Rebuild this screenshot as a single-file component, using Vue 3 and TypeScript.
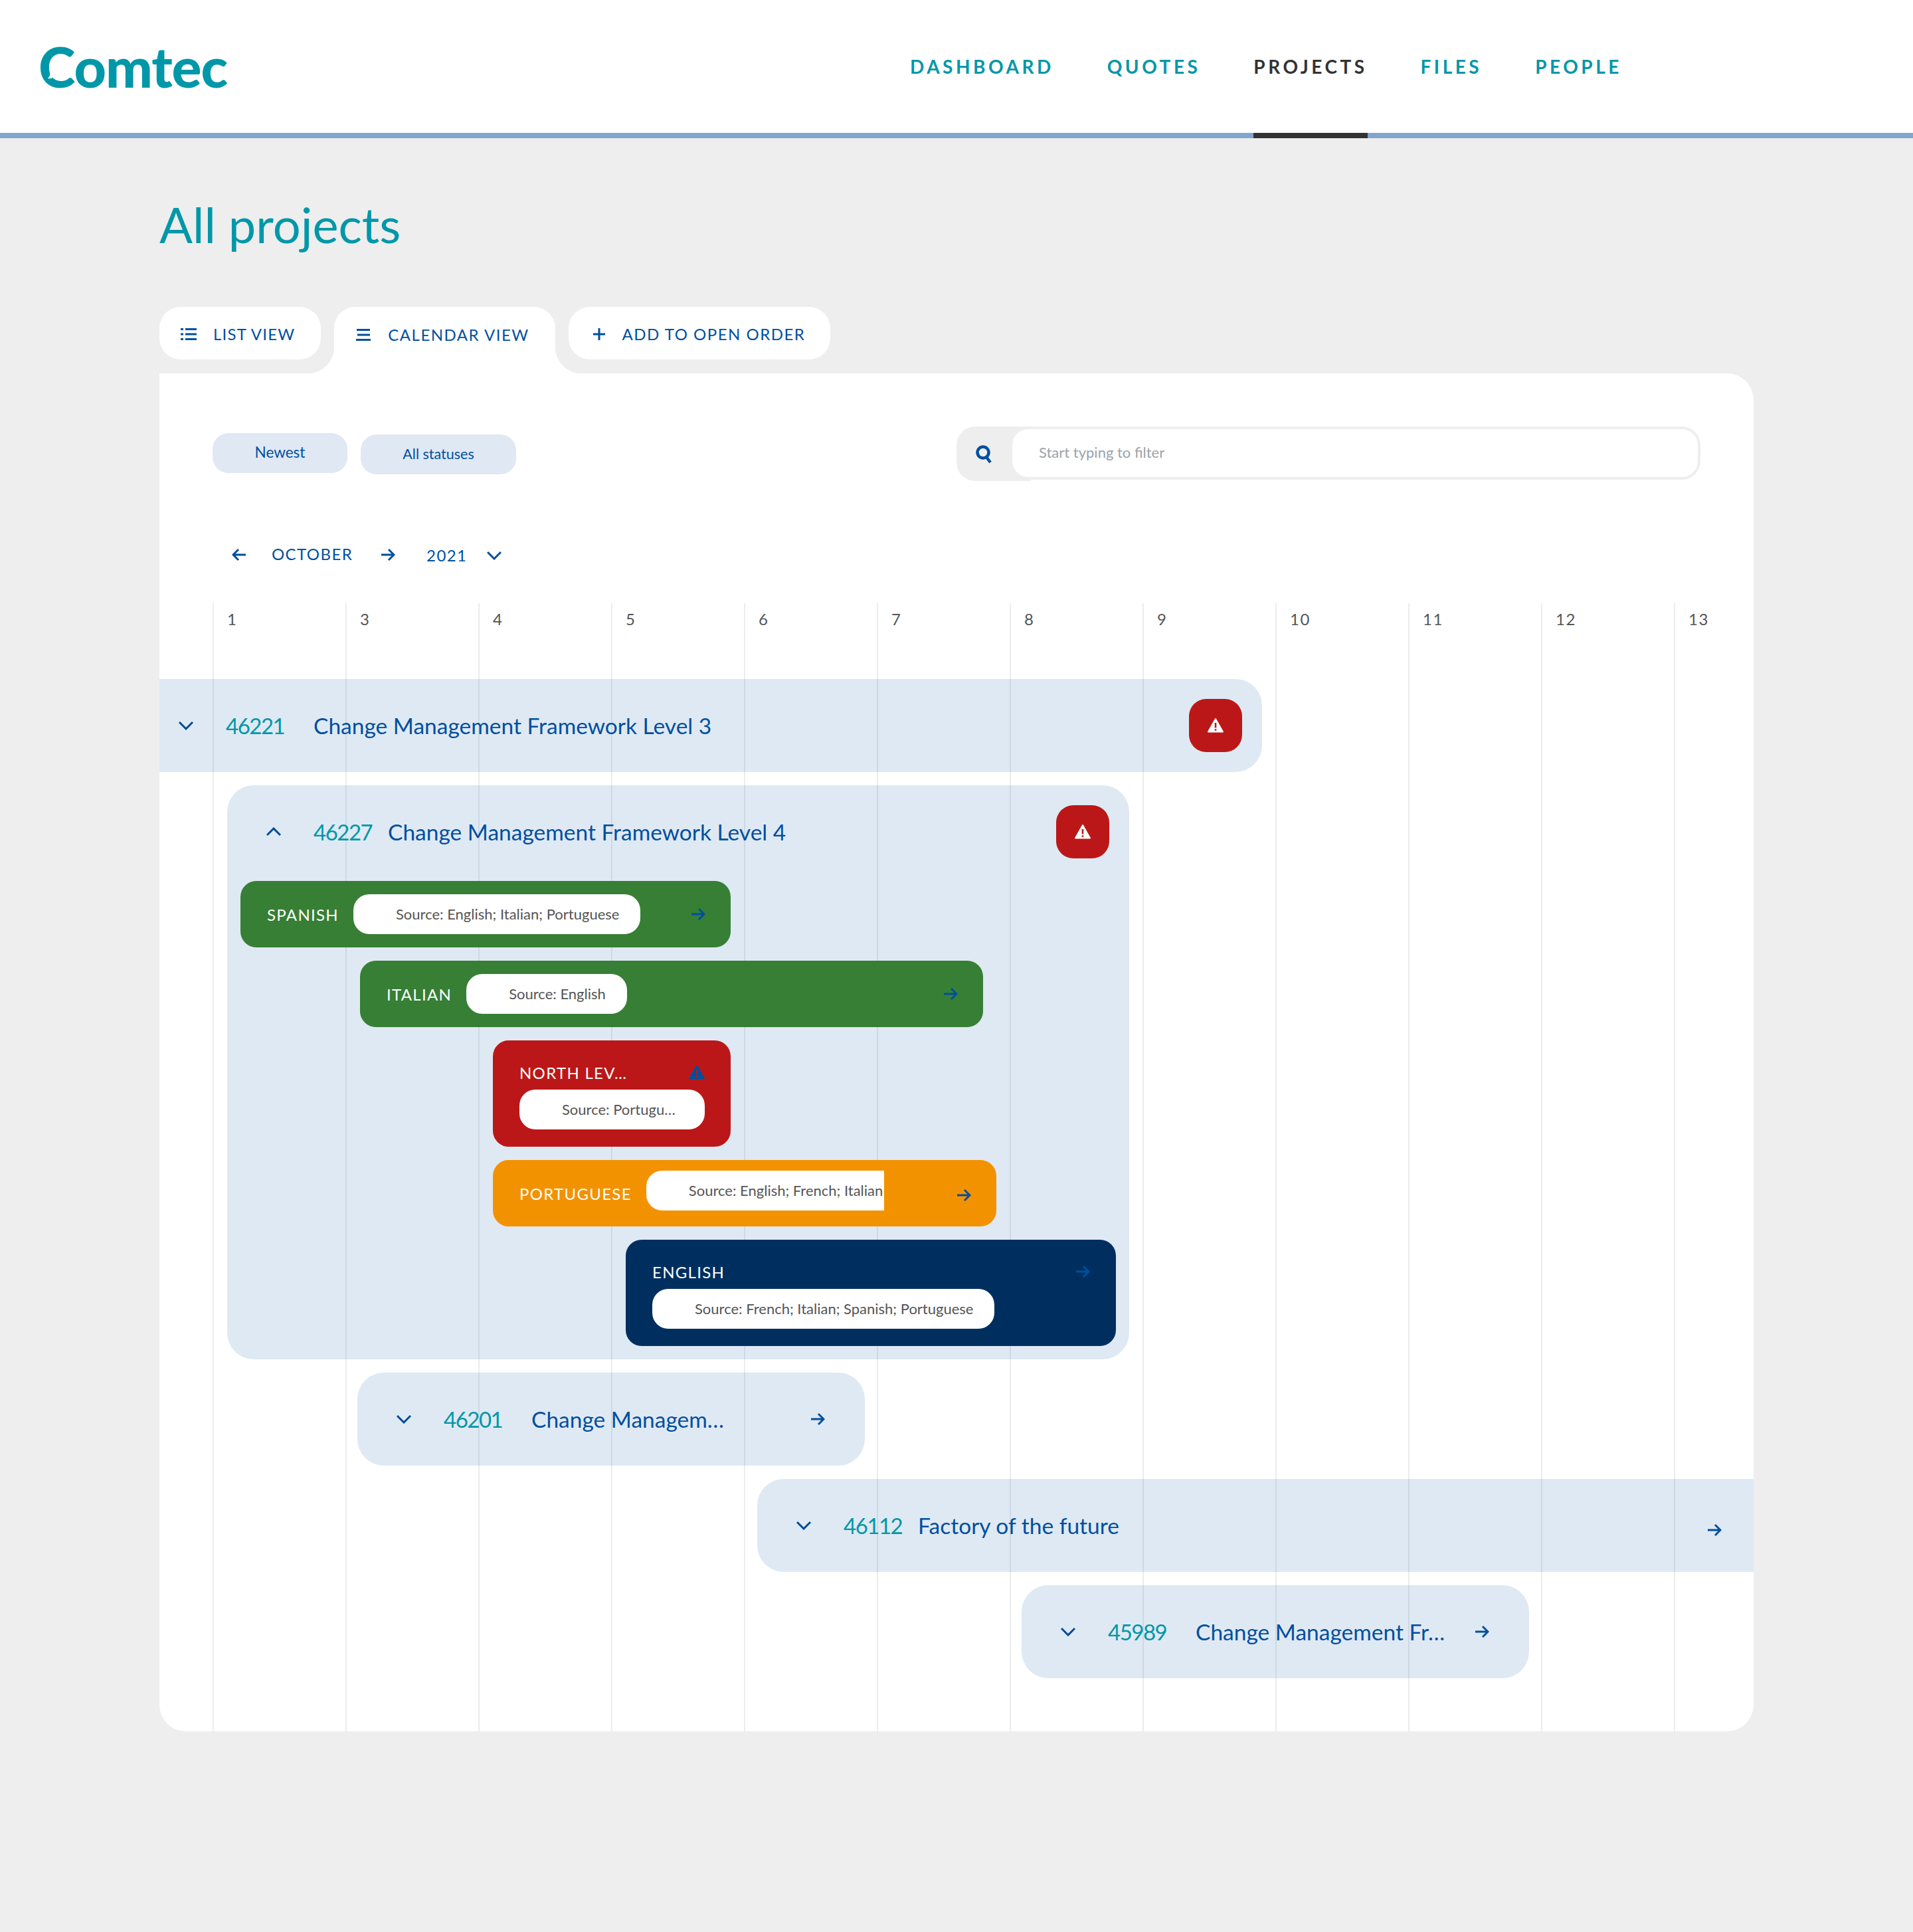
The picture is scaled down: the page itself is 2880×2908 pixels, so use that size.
<script setup lang="ts">
interface Bar { label: string; source: string; left: number; width: number; tone: string; stacked?: boolean; warn?: boolean; clipped?: boolean }
interface Row { id: string; title: string; left: number; width: number; end: 'alert' | 'arrow'; shape: string; tight?: boolean; open?: boolean; bars?: Bar[] }

const days: number[] = [1, 3, 4, 5, 6, 7, 8, 9, 10, 11, 12, 13]
const navItems = [
  { label: 'DASHBOARD', active: false },
  { label: 'QUOTES', active: false },
  { label: 'PROJECTS', active: true },
  { label: 'FILES', active: false },
  { label: 'PEOPLE', active: false },
]
const rows: Row[] = [
  { id: '46221', title: 'Change Management Framework Level 3', left: 0, width: 1660, end: 'alert', shape: 'flush-left' },
  {
    id: '46227', title: 'Change Management Framework Level 4', left: 102, width: 1358, end: 'alert', shape: 'round', tight: true, open: true,
    bars: [
      { label: 'SPANISH', source: 'Source: English; Italian; Portuguese', left: 20, width: 738, tone: 'green' },
      { label: 'ITALIAN', source: 'Source: English', left: 200, width: 938, tone: 'green' },
      { label: 'NORTH LEV…', source: 'Source: Portugu…', left: 400, width: 358, tone: 'red', stacked: true, warn: true },
      { label: 'PORTUGUESE', source: 'Source: English; French; Italian', left: 400, width: 758, tone: 'orange', clipped: true },
      { label: 'ENGLISH', source: 'Source: French; Italian; Spanish; Portuguese', left: 600, width: 738, tone: 'navy', stacked: true },
    ],
  },
  { id: '46201', title: 'Change Managem…', left: 298, width: 764, end: 'arrow', shape: 'round' },
  { id: '46112', title: 'Factory of the future', left: 900, width: 1500, end: 'arrow', shape: 'flush-right', tight: true },
  { id: '45989', title: 'Change Management Fr…', left: 1298, width: 764, end: 'arrow', shape: 'round' },
]
</script>

<template>
  <div class="page">
    <header class="header">
      <div class="logo">
        Comtec
        <svg class="logo-notch" width="16" height="12" viewBox="0 0 16 12"><path d="M15 1C12 3 6 3 3 1c1 3 0 6-3 9 4 1 9-1 11-4 2 0 3-1 4-5z" fill="#fff" /></svg>
      </div>
      <nav class="nav">
        <a v-for="n in navItems" :key="n.label" class="nav-link" :class="{ active: n.active }">{{ n.label }}</a>
      </nav>
    </header>

    <main class="main">
      <h1 class="title">All projects</h1>

      <div class="tabs">
        <button class="tab list">
          <svg width="24" height="20" viewBox="0 0 24 20"><path d="M0 1h4v3H0zM0 8.500h4v3H0zM0 16h4v3H0z" fill="#004f9f" /><path d="M7 2.500h17M7 10h17M7 17.500h17" stroke="#004f9f" stroke-width="3" /></svg>
          LIST VIEW
        </button>
        <button class="tab current">
          <svg width="24" height="20" viewBox="0 0 24 20"><path d="M2 2.500h20M3 10h19M1 17.500h22" stroke="#004f9f" stroke-width="3" /></svg>
          CALENDAR VIEW
        </button>
        <button class="tab add">
          <svg width="20" height="20" viewBox="0 0 20 20"><path d="M1 10h18M10 1v18" stroke="#004f9f" stroke-width="3" /></svg>
          ADD TO OPEN ORDER
        </button>
      </div>

      <section class="panel">
        <div class="toolbar">
          <div class="filters">
            <button class="filter newest">Newest</button>
            <button class="filter statuses">All statuses</button>
          </div>
          <div class="search">
            <span class="search-icon">
              <svg width="26" height="28" viewBox="0 0 26 28"><circle cx="12" cy="11" r="8.500" fill="none" stroke="#004f9f" stroke-width="4.500" /><path d="M17 18l6 8" stroke="#004f9f" stroke-width="4.500" /></svg>
            </span>
            <div class="search-input">Start typing to filter</div>
          </div>
        </div>

        <div class="month">
          <svg class="month-prev" width="22" height="20" viewBox="0 0 22 20"><path d="M21 10H2M10 2l-8 8 8 8" fill="none" stroke="#004f9f" stroke-width="3" /></svg>
          <span class="month-name">OCTOBER</span>
          <svg class="month-next" width="22" height="20" viewBox="0 0 22 20"><path d="M1 10h19M12 2l8 8-8 8" fill="none" stroke="#004f9f" stroke-width="3" /></svg>
          <span class="month-year">2021</span>
          <svg class="month-drop" width="22" height="14" viewBox="0 0 22 14"><path d="M1 2l10 10L21 2" fill="none" stroke="#004f9f" stroke-width="3" /></svg>
        </div>

        <div class="gantt">
          <div class="days">
            <span v-for="d in days" :key="d" class="day">{{ d }}</span>
          </div>

          <div class="rows">
            <article
              v-for="r in rows"
              :key="r.id"
              class="row"
              :class="r.shape"
              :style="{ marginLeft: r.left + 'px', width: r.width + 'px' }"
            >
              <div class="row-head" :class="{ 'row-tight': r.tight }">
                <svg class="chev" width="22" height="14" viewBox="0 0 22 14">
                  <path :d="r.open ? 'M1 12L11 2l10 10' : 'M1 2l10 10L21 2'" fill="none" stroke="#004a93" stroke-width="3" />
                </svg>
                <span class="row-id">{{ r.id }}</span>
                <span class="row-title">{{ r.title }}</span>
                <span v-if="r.end === 'alert'" class="alert">
                  <svg width="24" height="22" viewBox="0 0 24 22"><path d="M12 1L1 20.500h22z" fill="#fff" stroke="#fff" stroke-width="2" stroke-linejoin="round" /><path d="M12 7v7.500M12 16.200v2.600" stroke="#bc1718" stroke-width="2.600" /></svg>
                </span>
                <svg v-else class="row-arrow" width="22" height="20" viewBox="0 0 22 20"><path d="M1 10h19M12 2l8 8-8 8" fill="none" stroke="#004f9f" stroke-width="3" /></svg>
              </div>

              <div v-if="r.bars" class="bars">
                <div
                  v-for="b in r.bars"
                  :key="b.label"
                  class="bar"
                  :class="[b.tone, { stacked: b.stacked, clipped: b.clipped }]"
                  :style="{ marginLeft: b.left + 'px', width: b.width + 'px' }"
                >
                  <div class="bar-top">
                    <span class="bar-label">{{ b.label }}</span>
                    <template v-if="!b.stacked"><span class="pill">{{ b.source }}</span></template>
                    <svg v-if="b.warn" class="bar-end" width="24" height="22" viewBox="0 0 24 22"><path d="M12 1L1 20.500h22z" fill="#004f9f" stroke="#004f9f" stroke-width="2" stroke-linejoin="round" /><path d="M12 7v7.500M12 16.200v2.600" stroke="#bc1718" stroke-width="2.400" /></svg>
                    <svg v-else class="bar-end" width="22" height="20" viewBox="0 0 22 20"><path d="M1 10h19M12 2l8 8-8 8" fill="none" stroke="#004f9f" stroke-width="3" /></svg>
                  </div>
                  <span v-if="b.stacked" class="pill">{{ b.source }}</span>
                </div>
              </div>
            </article>
          </div>
        </div>
      </section>
    </main>
  </div>
</template>

<style>
body { margin: 0; }
</style>

<style scoped>
.page { background: #eeeeee; font-family: Lato, "Open Sans", sans-serif; padding-bottom: 302px; }

.header { height: 200px; border-bottom: 8px solid #80a6ce; background: #fff; display: flex; }
.logo { position: relative; margin-left: 58px; width: 302px; font-size: 84px; font-weight: 900; color: #0097a9; letter-spacing: -1px; line-height: 200px; height: 200px; }
.logo-notch { position: absolute; left: 14px; top: 108px; }
.nav { margin-left: 1010px; display: flex; gap: 80px; }
.nav-link { height: 200px; margin-bottom: -8px; border-bottom: 8px solid transparent; display: flex; align-items: center; font-size: 28px; font-weight: 700; letter-spacing: 4.500px; color: #0097a9; }
.nav-link.active { color: #333; border-bottom-color: #333; }

.main { padding: 0 240px; }
.title { margin: 0; padding-top: 88px; height: 166px; box-sizing: border-box; font-size: 74px; line-height: 84px; font-weight: 400; color: #0097a9; }

.tabs { display: flex; gap: 20px; margin-top: 88px; height: 100px; align-items: flex-start; position: relative; }
.tab { height: 79px; border: 0; border-radius: 32px; background: #fff; color: #004f9f; font-family: inherit; font-size: 24px; letter-spacing: 1.500px; display: flex; align-items: center; gap: 25px; padding: 2px 39px 0 32px; box-sizing: border-box; position: relative; z-index: 1; }
.tab.list { letter-spacing: 1.200px; padding-right: 39px; }
.tab.current { height: 100px; padding-bottom: 19px; border-radius: 32px 32px 0 0; z-index: 0; }
.tab.current::before, .tab.current::after { content: ""; position: absolute; bottom: 0; width: 40px; height: 40px; }
.tab.current::before { left: -40px; background: radial-gradient(circle at 0 0, #eee 40px, #fff 40.500px); }
.tab.current::after { right: -40px; background: radial-gradient(circle at 100% 0, #eee 40px, #fff 40.500px); }
.tab.add { padding-left: 36px; padding-right: 38px; }

.panel { background: #fff; border-radius: 0 40px 40px 40px; overflow: hidden; padding-top: 80px; }
.toolbar { display: flex; justify-content: space-between; padding: 0 80px; height: 82px; }
.filters { display: flex; gap: 20px; padding-top: 10px; align-items: flex-start; }
.filter { height: 60px; border: 0; border-radius: 24px; background: #dfe8f3; color: #004f9f; font-family: inherit; font-size: 22.500px; padding: 0 0 3px; }
.newest { width: 203px; }
.statuses { width: 234px; margin-top: 2px; font-size: 21.500px; }
.search { width: 1120px; display: flex; }
.search-icon { width: 112px; margin-right: -32px; height: 82px; border-radius: 28px 0 0 28px; background: #eee; display: flex; align-items: center; padding: 2px 0 0 28px; box-sizing: border-box; }
.search-input { flex: 1; height: 80px; box-sizing: border-box; border: 4px solid #eee; border-radius: 28px; background: #fff; position: relative; font-size: 22px; color: #9ba3aa; display: flex; align-items: center; padding: 0 0 3px 40px; }

.month { margin-top: 80px; height: 62px; display: flex; align-items: center; padding-left: 109px; color: #004f9f; font-size: 24px; letter-spacing: 1.400px; }
.month-name { margin-left: 38px; margin-top: -4px; }
.month-next { margin-left: 42px; }
.month-year { margin-left: 47px; }
.month-drop { margin-left: 30px; margin-top: 2px; }

.gantt { margin-top: 42px; padding-bottom: 80px; background-image: linear-gradient(90deg, #ebecee 2px, transparent 2px); background-size: 200px 100%; background-position: 80px 0; }
.days { display: grid; grid-template-columns: repeat(12, 200px); margin-left: 80px; height: 114px; color: #555; font-size: 24px; letter-spacing: 1.500px; line-height: 24px; }
.day { padding: 12px 0 0 22px; }

.rows { display: flex; flex-direction: column; gap: 20px; }
.row { background: rgba(0, 79, 159, 0.125); box-sizing: border-box; }
.round { border-radius: 40px; }
.flush-left { border-radius: 0 40px 40px 0; }
.flush-right { border-radius: 40px 0 0 40px; }
.row-head { height: 140px; display: flex; align-items: center; padding: 0 30px 0 59px; }
.flush-left .row-head { padding-left: 29px; }
.chev { flex: none; }
.row-id { margin-left: 49px; width: 132px; flex: none; font-size: 33px; color: #0097a9; letter-spacing: -1.500px; }
.row-tight .row-id { width: 112px; }
.row-title { font-size: 33.500px; color: #004f9f; white-space: nowrap; flex: 1; min-width: 0; }
.alert { width: 80px; height: 80px; border-radius: 26px; background: #bc1718; display: flex; align-items: center; justify-content: center; flex: none; }
.row-arrow { flex: none; margin-right: 30px; }
.flush-right .row-arrow { margin-right: 18px; margin-top: 14px; }

.bars { display: flex; flex-direction: column; gap: 20px; margin-top: 4px; padding-bottom: 20px; }
.bar { box-sizing: border-box; height: 100px; border-radius: 24px; padding: 20px 38px 20px 40px; }
.bar.stacked { height: 160px; padding: 32px 39px 0 40px; }
.green { background: #367f35; }
.red { background: #bc1718; }
.orange { background: #f39200; }
.navy { background: #002f5f; }
.bar-top { display: flex; align-items: center; height: 60px; gap: 22px; }
.stacked .bar-top { height: 32px; margin-bottom: 10px; }
.bar-label { color: #fff; font-size: 24px; letter-spacing: 1.300px; white-space: nowrap; }
.bar-end { margin-left: auto; flex: none; }
.pill { display: inline-flex; align-items: center; height: 60px; border-radius: 24px; background: #fff; color: #555; font-size: 22px; padding: 0 32px 2px 64px; white-space: nowrap; box-sizing: border-box; }
.red .pill { display: flex; }
.clipped .pill { width: 358px; padding-right: 0; border-radius: 24px 0 0 24px; overflow: hidden; margin-top: -8px; }
.clipped .bar-end { margin-top: 6px; }
</style>
